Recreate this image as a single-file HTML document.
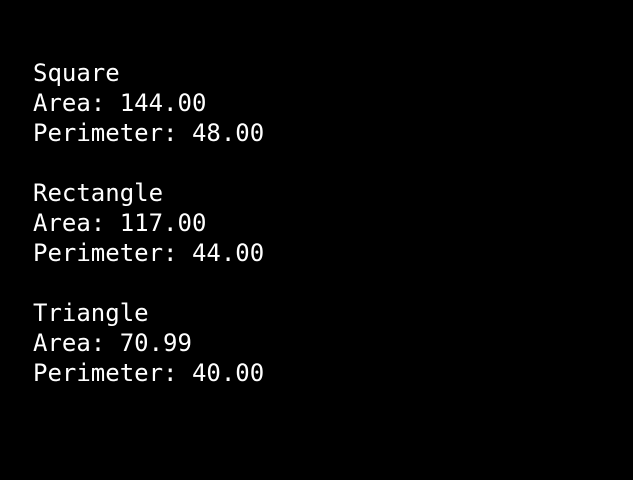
<!DOCTYPE html>
<html><head><meta charset="utf-8"><style>
html,body{margin:0;padding:0;background:#000;width:633px;height:480px;overflow:hidden}
pre{margin:0;position:absolute;left:33px;top:58px;color:#fff;font-family:"DejaVu Sans Mono","Liberation Mono",monospace;font-size:24px;line-height:30px}
</style></head><body>
<pre>Square
Area: 144.00
Perimeter: 48.00

Rectangle
Area: 117.00
Perimeter: 44.00

Triangle
Area: 70.99
Perimeter: 40.00</pre>
</body></html>
